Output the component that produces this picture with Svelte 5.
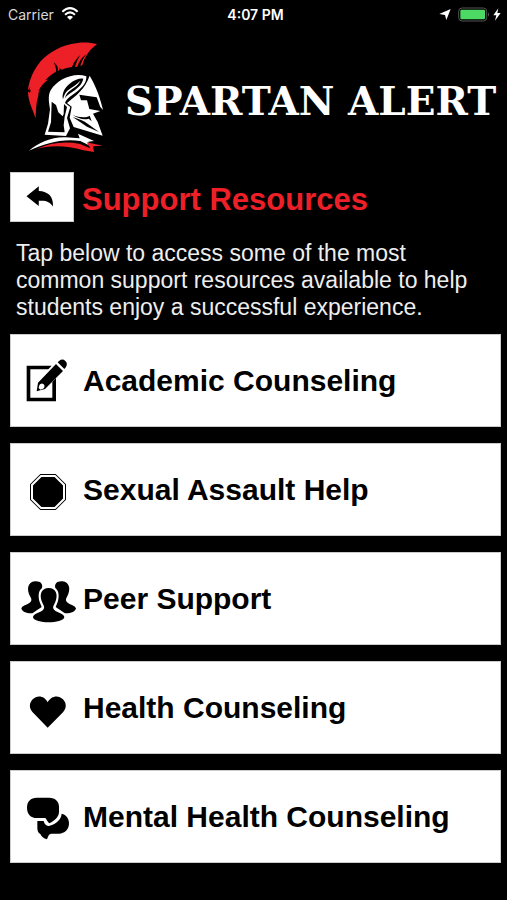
<script>
  const resources = [
    { name: 'Academic Counseling', icon: 'edit', viewBox: '3 1 216 210' },
    { name: 'Sexual Assault Help', icon: 'stop', viewBox: '3 -16 216 210' },
    { name: 'Peer Support', icon: 'group', viewBox: '2 -4 216 210' },
    { name: 'Health Counseling', icon: 'heart', viewBox: '3 -6 216 210' },
    { name: 'Mental Health Counseling', icon: 'chat', viewBox: '3 -11 216 210' }
  ];
</script>

<svelte:head>
  <title>Spartan Alert</title>
</svelte:head>

<div class="status">
  <div class="carrier">
    <span>Carrier</span>
    <svg class="wifi" viewBox="0 0 54 42" aria-hidden="true">
      <path d="M4 14 Q27 -7 50 14" />
      <path d="M12 23 Q27 9 42 23" />
      <path class="fill" d="M18 30 Q27 23 36 30 L27 39Z" />
    </svg>
  </div>
  <span class="time">4:07 PM</span>
  <div class="power">
    <svg viewBox="0 0 195 45" aria-hidden="true">
      <path fill="#fff" d="M4 21 L38 6 L25 39 L21 24Z" />
      <rect x="62" y="3" width="84" height="39" rx="10" fill="none" stroke="#555" stroke-width="3" />
      <rect x="67" y="8" width="74" height="29" rx="4" fill="#4cd964" />
      <path fill="#555" d="M150 16 Q157 22 150 29Z" />
      <path fill="#fff" d="M181 4 L166 25 H175 L171 41 L188 18 H178Z" />
    </svg>
  </div>
</div>

<main>
  <header>
    <svg class="helmet" viewBox="0 0 285 366" aria-hidden="true">
      <!-- crest -->
      <path
        fill="#ed1f27"
        d="M231 25 C209 18 181 18 151 25 C112 34 75 57 54 86 C36 111 24 143 24 168 C25 196 34 209 47 247 C48 218 49 197 55 180 C54 171 58 163 65 159 L55 166 C62 151 72 140 86 130 L76 133 C86 121 96 114 108 107 C109 97 106 89 101 79 C111 86 116 96 113 105 L119 102 L118 96 L125 101 C136 96 145 95 156 93 C161 79 170 67 181 57 C171 73 168 84 165 93 L172 92 C177 77 185 64 199 54 C189 67 184 80 181 90 L187 88 C193 65 207 42 231 25Z"
      />
      <path fill="#000" d="M22 166 L31 153 L28 164 L33 161 L30 170Z" />
      <!-- dome and neck guard -->
      <path
        fill="#fff"
        d="M199 121 C161 108 112 130 92 163 C82 181 88 205 90 220 L84 263 L74 296 L138 300 L150 277 L141 246 L151 213 L135 201 C140 186 156 178 174 164 C190 151 200 138 199 121Z"
      />
      <path
        fill="#000"
        d="M95 197 L108 207 L115 229 L128 241 L131 234 L132 204 L141 213 L134 242 L131 268 L134 289 L84 287 L93 259Z"
      />
      <path
        fill="#000"
        d="M190 128 C172 124 146 141 134 160 C128 171 126 182 129 190 C132 179 135 171 142 164 C158 152 171 145 181 134 C175 149 157 158 145 168 C139 174 136 181 134 188 C144 170 184 159 190 128Z"
      />
      <!-- face plate -->
      <path
        fill="#fff"
        d="M209 119 C221 140 237 169 249 222 L241 213 L230 184 L178 176 L183 193 L201 193 L208 219 L241 225 L219 233 L233 258 L248 299 L161 273 L149 245 L155 212 L141 201 C168 179 196 158 209 119Z"
      />
      <path fill="#000" d="M158 237 C178 245 198 246 209 239 L215 256 L206 248 C191 252 175 248 158 237Z" />
      <path fill="#000" d="M158 243 C176 249 192 254 204 264 L237 288 L201 272Z" />
      <!-- shoulders -->
      <path
        fill="#fff"
        d="M27 344 C57 319 96 302 137 304 L179 307 L174 293 L222 315 L205 317 L207 328 L181 315 C129 307 76 321 27 344Z"
      />
      <path
        fill="#ed1f27"
        d="M49 339 C91 320 136 315 180 324 L211 337 L200 319 L248 329 L219 331 L222 348 L190 343 C142 329 94 326 49 339Z"
      />
    </svg>
    <h1>SPARTAN ALERT</h1>
  </header>

  <div class="heading">
    <button class="back" aria-label="Back">
      <svg viewBox="0 0 192 150" aria-hidden="true">
        <path d="M48 72 L86 41 V56 C115 57 132 73 130 104 C121 89 108 84 86 86 V102Z" />
      </svg>
    </button>
    <h2>Support Resources</h2>
  </div>

  <p>
    Tap below to access some of the most common support resources available to help students enjoy a
    successful experience.
  </p>

  <nav>
    {#each resources as resource}
      <button class="resource">
        <svg viewBox={resource.viewBox} aria-hidden="true">
          {#if resource.icon === 'edit'}
            <path d="M50 60 H125 L115 71 H61 V156 H127 V109 L138 97 V167 H50Z" />
            <path
              fill-rule="evenodd"
              d="M80 137 L84 111 L138 55 L159 76 L105 130Z M88 119 L86 127 L91 132 L99 129 A8 8 0 1 0 88 119Z"
            />
            <path d="M143 50 L148 45 Q158 38 166 46 Q174 54 168 64 L163 70Z" />
          {:else if resource.icon === 'stop'}
            <path d="M91 41 H137 L168 72 V118 L137 149 H91 L60 118 V72Z" />
            <path class="ring" d="M93 47 H135 L162 74 V116 L135 143 H93 L66 116 V74Z" />
          {:else if resource.icon === 'group'}
            <path
              d="M74 48 C91 47 98 56 95 68 C84 76 83 93 88 110 L94 125 C86 131 75 137 66 144 C50 145 34 139 33 129 C36 120 49 119 58 112 C64 107 65 102 60 94 C48 75 51 50 74 48Z"
            />
            <path
              d="M156 48 C139 47 132 56 135 68 C146 76 147 93 142 110 L136 125 C144 131 155 137 164 144 C180 145 196 139 197 129 C194 120 181 119 172 112 C166 107 165 102 170 94 C182 75 179 50 156 48Z"
            />
            <path
              d="M115 68 C137 68 144 88 135 110 C130 121 125 126 132 134 C140 142 162 145 162 156 C160 166 137 171 115 171 C93 171 70 166 68 156 C68 145 90 142 98 134 C105 126 100 121 95 110 C86 88 93 68 115 68Z"
            />
          {:else if resource.icon === 'heart'}
            <path
              d="M113 82 C105 63 82 58 68 73 C56 86 58 101 68 112 L113 158 L159 112 C169 101 171 86 159 73 C145 58 122 63 113 82Z"
            />
          {:else}
            <path
              d="M80 36 H117 C137 36 147 48 147 63 V80 C146 94 135 105 118 113 C113 110 111 103 106 97 H80 C62 97 51 85 51 66 C51 47 62 36 80 36Z"
            />
            <path
              d="M82 106 H101 C103 117 111 123 119 120 C139 114 153 102 155 84 C169 88 177 98 177 113 C177 132 164 144 147 144 H124 C117 144 114 153 111 161 C101 158 94 152 91 145 C84 141 82 134 82 126Z"
            />
          {/if}
        </svg>
        <span>{resource.name}</span>
      </button>
    {/each}
  </nav>
</main>

<style>
  :global(body) {
    background: #000;
    color: #fff;
    font-family: 'Liberation Sans', Arial, sans-serif;
  }
  .status {
    display: grid;
    grid-template-columns: 1fr auto 1fr;
    align-items: center;
    height: 28px;
    padding: 0 4px 0 8px;
    font-family: Inter, sans-serif;
    font-size: 14px;
    color: #d8d8d8;
  }
  .carrier {
    display: flex;
    align-items: center;
    gap: 7px;
  }
  .wifi {
    width: 18px;
    height: 14px;
    fill: none;
    stroke: #fff;
    stroke-width: 6px;
  }
  .wifi .fill {
    fill: #fff;
    stroke: none;
  }
  .time {
    font-weight: 600;
    color: #fff;
  }
  .power {
    display: flex;
    justify-content: flex-end;
  }
  .power svg {
    width: 65px;
    height: 15px;
  }
  main {
    padding: 8px 6px 24px 10px;
  }
  header {
    display: flex;
    align-items: center;
    gap: 10px;
    padding-left: 10px;
  }
  .helmet {
    flex: none;
    width: 95px;
    height: 122px;
  }
  h1 {
    margin: 0;
    padding-top: 8px;
    font-family: 'DejaVu Serif', serif;
    font-size: 39px;
    line-height: 48px;
    white-space: nowrap;
  }
  .heading {
    display: flex;
    align-items: center;
    gap: 8px;
    margin-top: 14px;
  }
  button {
    padding: 0;
    border: 1px solid #ccc;
    border-radius: 0;
    background: #fff;
    color: #000;
    font-family: inherit;
    cursor: pointer;
  }
  .back {
    width: 64px;
    height: 50px;
  }
  .back svg {
    display: block;
    width: 100%;
  }
  h2 {
    margin: 0;
    padding-top: 6px;
    color: #ed1f27;
    font-size: 31px;
    line-height: 36px;
  }
  p {
    margin: 18px 16px 13px 6px;
    font-size: 23px;
    line-height: 27px;
    color: #eee;
  }
  nav {
    display: flex;
    flex-direction: column;
    gap: 16px;
  }
  .resource {
    display: flex;
    align-items: center;
    min-height: 93px;
    font-size: 30px;
    font-weight: bold;
    text-align: left;
  }
  .resource svg {
    flex: none;
    width: 72px;
    height: 70px;
  }
  .ring {
    fill: #000;
    stroke: #fff;
    stroke-width: 6px;
  }
</style>
